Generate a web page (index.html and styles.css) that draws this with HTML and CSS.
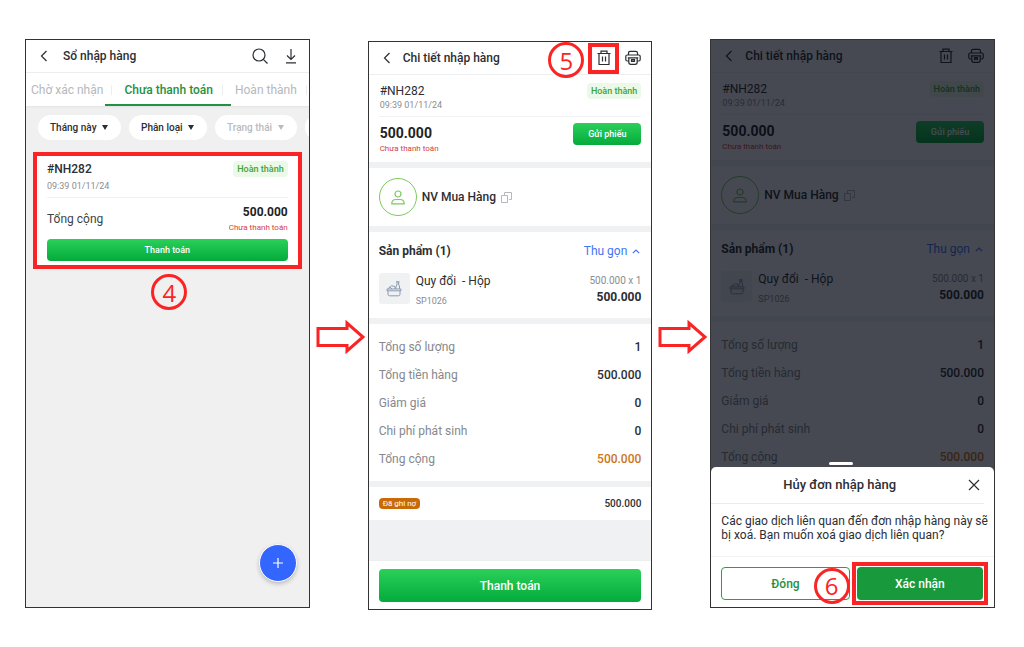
FILE: index.html
```html
<!DOCTYPE html>
<html lang="vi">
<head>
    <meta charset="UTF-8">
    <meta name="viewport" content="width=device-width, initial-scale=1.0">
    <title>Sổ nhập hàng</title>
    <link rel="stylesheet" href="styles.css">
</head>
<body>
    <!-- shared icons -->
    <svg class="sprite" aria-hidden="true">
        <symbol id="i-back" viewBox="0 0 8 12"><path d="M6.500 1L1.500 6l5 5" /></symbol>
        <symbol id="i-search" viewBox="0 0 16 16"><circle cx="7" cy="7" r="6" /><path d="M11.300 11.300L15.500 15.500" /></symbol>
        <symbol id="i-download" viewBox="0 0 12 16"><path d="M6 1v10M2 7.500l4 4 4-4M1 14.800h10" /></symbol>
        <symbol id="i-trash" viewBox="0 0 14 16"><path d="M.5 3.500h13M4 3.500V1.200h6v2.300M2 3.500v11h10v-11M5.500 6.500v5M8.500 6.500v5" /></symbol>
        <symbol id="i-print" viewBox="0 0 16 16"><path d="M3.500 5V3Q3.500 1.300 5.200 1.300h5.600Q12.500 1.300 12.500 3V5M3.500 11H2.200Q.8 11 .8 9.500v-3Q.8 5 2.200 5h11.600q1.400 0 1.400 1.500v3q0 1.500-1.400 1.500h-1.300M2.800 7.800h10.400M3.800 7.800v4.500q0 2 2 2h4.400q2 0 2-2V7.800M6 9.500h4M6 11.500h4M6.500 9v3M8 9v3M9.500 9v3" /></symbol>
        <symbol id="i-user" viewBox="0 0 14 15"><circle cx="7" cy="4" r="3" /><path d="M.8 13.800c0-3 2-4.300 4-4.300h4.400c2 0 4 1.300 4 4.300z" /></symbol>
        <symbol id="i-copy" viewBox="0 0 11 11"><path d="M3.500 3V.5h7v7H8M.5 3.500h6v7h-6z" /></symbol>
        <symbol id="i-up" viewBox="0 0 8 5"><path d="M.8 4.200L4 1l3.200 3.200" /></symbol>
        <symbol id="i-basket" viewBox="0 0 16 16"><path d="M1 8h14v1.800H1zM2 9.800v3.400q0 1.600 1.600 1.600h8.800q1.600 0 1.600-1.600V9.800M2.500 8q0-2 2-2.300Q5.500 4 7 5.200q1.300-.6 2 .8V8M10 8V5l1-1V.8M13.500 8V5l-.8-1V.8M10 .8h3.500M4 6l2 2" /></symbol>
        <symbol id="i-close" viewBox="0 0 12 12"><path d="M1 1l10 10M11 1L1 11" /></symbol>
    </svg>

    <main class="flow">
        <!-- step 4: order list -->
        <section class="phone list">
            <header class="topbar">
                <button class="icon-btn"><svg class="icon back"><use href="#i-back" /></svg></button>
                <h1>Sổ nhập hàng</h1>
                <button class="icon-btn"><svg class="icon search"><use href="#i-search" /></svg></button>
                <button class="icon-btn"><svg class="icon download"><use href="#i-download" /></svg></button>
            </header>
            <nav class="tabs">
                <a href="#">Chờ xác nhận</a>
                <a href="#" class="active">Chưa thanh toán</a>
                <a href="#">Hoàn thành</a>
            </nav>
            <div class="filters">
                <button>Tháng này <i class="caret"></i></button>
                <button>Phân loại <i class="caret"></i></button>
                <button class="muted">Trạng thái <i class="caret"></i></button>
                <button class="muted" aria-label="Lọc thêm"></button>
            </div>
            <article class="order">
                <div class="row order-head">
                    <div>
                        <h2>#NH282</h2>
                        <time>09:39 01/11/24</time>
                    </div>
                    <span class="badge">Hoàn thành</span>
                </div>
                <div class="row order-total">
                    <span>Tổng cộng</span>
                    <div class="amount">
                        <strong>500.000</strong>
                        <small class="unpaid">Chưa thanh toán</small>
                    </div>
                </div>
                <button class="btn small">Thanh toán</button>
            </article>
            <span class="step below">4</span>
            <button class="fab" aria-label="Thêm"><svg class="icon"><path d="M6 1v10M1 6h10" /></svg></button>
        </section>

        <svg class="arrow" viewBox="0 0 50 34"><path d="M2 8.500h29V3l16 14-16 14v-5.500H2z" /></svg>

        <!-- step 5: order detail -->
        <section class="phone detail lower">
            <header class="topbar">
                <button class="icon-btn"><svg class="icon back"><use href="#i-back" /></svg></button>
                <h1>Chi tiết nhập hàng</h1>
                <button class="icon-btn marked"><svg class="icon trash"><use href="#i-trash" /></svg><span class="step beside">5</span></button>
                <button class="icon-btn"><svg class="icon print"><use href="#i-print" /></svg></button>
            </header>
            <div class="block summary">
                <div class="row order-head">
                    <div>
                        <h2>#NH282</h2>
                        <time>09:39 01/11/24</time>
                    </div>
                    <span class="badge">Hoàn thành</span>
                </div>
                <div class="row pay">
                    <div>
                        <strong>500.000</strong>
                        <small class="unpaid">Chưa thanh toán</small>
                    </div>
                    <button class="btn small">Gửi phiếu</button>
                </div>
            </div>
            <div class="block supplier">
                <span class="avatar"><svg class="icon"><use href="#i-user" /></svg></span>
                <span>NV Mua Hàng</span>
                <svg class="icon copy"><use href="#i-copy" /></svg>
            </div>
            <div class="block products">
                <div class="row products-head">
                    <h3>Sản phẩm (1)</h3>
                    <a href="#">Thu gọn <svg class="icon up"><use href="#i-up" /></svg></a>
                </div>
                <div class="product">
                    <span class="thumb"><svg class="icon"><use href="#i-basket" /></svg></span>
                    <div class="name">
                        <span>Quy đổi &nbsp;- Hộp</span>
                        <small>SP1026</small>
                    </div>
                    <div class="price">
                        <small>500.000 x 1</small>
                        <strong>500.000</strong>
                    </div>
                </div>
            </div>
            <dl class="block totals">
                <div class="row"><dt>Tổng số lượng</dt><dd>1</dd></div>
                <div class="row"><dt>Tổng tiền hàng</dt><dd>500.000</dd></div>
                <div class="row"><dt>Giảm giá</dt><dd>0</dd></div>
                <div class="row"><dt>Chi phí phát sinh</dt><dd>0</dd></div>
                <div class="row"><dt>Tổng cộng</dt><dd class="orange">500.000</dd></div>
            </dl>
            <div class="row debt">
                <span class="tag">Đã ghi nợ</span>
                <strong>500.000</strong>
            </div>
            <footer class="actions">
                <button class="btn">Thanh toán</button>
            </footer>
        </section>

        <svg class="arrow" viewBox="0 0 50 34"><path d="M2 8.500h29V3l16 14-16 14v-5.500H2z" /></svg>

        <!-- step 6: confirm dialog over the detail -->
        <section class="phone detail">
            <header class="topbar">
                <button class="icon-btn"><svg class="icon back"><use href="#i-back" /></svg></button>
                <h1>Chi tiết nhập hàng</h1>
                <button class="icon-btn"><svg class="icon trash"><use href="#i-trash" /></svg></button>
                <button class="icon-btn"><svg class="icon print"><use href="#i-print" /></svg></button>
            </header>
            <div class="block summary">
                <div class="row order-head">
                    <div>
                        <h2>#NH282</h2>
                        <time>09:39 01/11/24</time>
                    </div>
                    <span class="badge">Hoàn thành</span>
                </div>
                <div class="row pay">
                    <div>
                        <strong>500.000</strong>
                        <small class="unpaid">Chưa thanh toán</small>
                    </div>
                    <button class="btn small">Gửi phiếu</button>
                </div>
            </div>
            <div class="block supplier">
                <span class="avatar"><svg class="icon"><use href="#i-user" /></svg></span>
                <span>NV Mua Hàng</span>
                <svg class="icon copy"><use href="#i-copy" /></svg>
            </div>
            <div class="block products">
                <div class="row products-head">
                    <h3>Sản phẩm (1)</h3>
                    <a href="#">Thu gọn <svg class="icon up"><use href="#i-up" /></svg></a>
                </div>
                <div class="product">
                    <span class="thumb"><svg class="icon"><use href="#i-basket" /></svg></span>
                    <div class="name">
                        <span>Quy đổi &nbsp;- Hộp</span>
                        <small>SP1026</small>
                    </div>
                    <div class="price">
                        <small>500.000 x 1</small>
                        <strong>500.000</strong>
                    </div>
                </div>
            </div>
            <dl class="block totals">
                <div class="row"><dt>Tổng số lượng</dt><dd>1</dd></div>
                <div class="row"><dt>Tổng tiền hàng</dt><dd>500.000</dd></div>
                <div class="row"><dt>Giảm giá</dt><dd>0</dd></div>
                <div class="row"><dt>Chi phí phát sinh</dt><dd>0</dd></div>
                <div class="row"><dt>Tổng cộng</dt><dd class="orange">500.000</dd></div>
            </dl>
            <div class="overlay">
                <span class="handle"></span>
                <div class="sheet" role="dialog" aria-labelledby="sheet-title">
                    <div class="sheet-head">
                        <h2 id="sheet-title">Hủy đơn nhập hàng</h2>
                        <button class="icon-btn" aria-label="Đóng"><svg class="icon close"><use href="#i-close" /></svg></button>
                    </div>
                    <p>Các giao dịch liên quan đến đơn nhập hàng này sẽ bị xoá. Bạn muốn xoá giao dịch liên quan?</p>
                    <div class="sheet-actions">
                        <button class="btn outline">Đóng</button>
                        <div class="confirm">
                            <button class="btn solid">Xác nhận</button>
                            <span class="step beside">6</span>
                        </div>
                    </div>
                </div>
            </div>
        </section>
    </main>
</body>
</html>
```

FILE: styles.css
```css
* {
    margin: 0;
    padding: 0;
    box-sizing: border-box;
}
body {
    min-height: 100vh;
    display: flex;
    padding: 39px 29px 39px 25px;
    background: #fff;
    color: #2b2e33;
    font-family: Roboto, sans-serif;
    font-size: 12px;
    line-height: 16px;
}
button {
    border: 0;
    background: none;
    color: inherit;
    font: inherit;
    cursor: pointer;
}
a {
    color: inherit;
    text-decoration: none;
}
h1, h2, h3 {
    font-size: 12px;
    font-weight: 500;
}
small {
    display: block;
    font-size: 10px;
    line-height: 12px;
}
.sprite {
    position: absolute;
    width: 0;
    height: 0;
}
.icon {
    display: block;
    fill: none;
    stroke: currentColor;
    stroke-width: 1.2;
}
.flow {
    flex: 1;
    display: grid;
    grid-template-columns: 1fr 58px 1fr 58px 1fr;
}
.phone {
    position: relative;
    display: flex;
    flex-direction: column;
    min-width: 0;
    border: 1px solid #333;
    overflow: hidden;
    background: #f0f1f3;
}
.phone.list {
    background: #f0f0f0;
}
.phone.lower {
    margin: 2px 0 -2px;
}
.arrow {
    align-self: center;
    justify-self: center;
    width: 50px;
    margin: 26px 0 0 4px;
    fill: #fff;
    stroke: #fb2424;
    stroke-width: 3;
}
.row {
    display: flex;
    justify-content: space-between;
    align-items: center;
}

/* top bar */
.topbar {
    display: flex;
    align-items: center;
    height: 33px;
    padding: 0 10px 0 14px;
    border-bottom: 1px solid #eceef0;
    background: #fff;
}
.topbar h1 {
    flex: 1;
    margin-left: 12px;
}
.list .topbar h1 {
    margin-left: 15px;
}
.icon-btn {
    position: relative;
}
.back {
    width: 8px;
    height: 12px;
}
.search {
    width: 16px;
    height: 16px;
}
.download {
    width: 12px;
    height: 16px;
    margin: 0 2px 0 17px;
}
.trash {
    width: 14px;
    height: 16px;
}
.print {
    width: 16px;
    height: 16px;
}
.detail .topbar .icon-btn:nth-of-type(2) {
    display: flex;
    align-items: center;
    justify-content: center;
    width: 31px;
    height: 31px;
    margin-right: 6px;
}
.marked {
    border: 4px solid #fb2424;
}

/* numbered steps */
.step {
    display: flex;
    align-items: center;
    justify-content: center;
    width: 36px;
    height: 36px;
    border: 3px solid #fb2424;
    border-radius: 50%;
    color: #fb2424;
    font: 24px "Open Sans", sans-serif;
}
.step.below {
    align-self: center;
    margin: 5px 0 0 4px;
}
.step.beside {
    position: absolute;
    top: 50%;
    right: 100%;
    margin: -16px 8px 0 0;
}
.confirm .step.beside {
    margin-right: 6px;
}

/* order list */
.tabs {
    display: flex;
    height: 33px;
    background: #fff;
    color: #b5b8bc;
    white-space: nowrap;
    box-shadow: 0 1px 2px #e2e2e2;
}
.tabs a {
    position: relative;
    padding: 9px 10px 0 12px;
}
.tabs a:first-child {
    padding-left: 5px;
    padding-right: 9px;
}
.tabs a::before {
    content: "";
    position: absolute;
    right: 0;
    top: 12px;
    height: 10px;
    border-left: 1px solid #eee;
}
.tabs .active {
    color: #23913f;
    font-weight: 500;
}
.tabs .active::after {
    content: "";
    position: absolute;
    left: -7px;
    right: -8px;
    bottom: 0;
    height: 2px;
    background: #23913f;
}
.filters {
    display: flex;
    gap: 8px;
    padding: 9px 0 12px 12px;
}
.filters button {
    flex: none;
    height: 25px;
    padding: 0 12px;
    border-radius: 13px;
    background: #fff;
    font-size: 10px;
    font-weight: 500;
}
.filters .muted {
    color: #b9bbbe;
}
.caret {
    display: inline-block;
    margin: 0 1px 1px 3px;
    border: 3px solid transparent;
    border-top: 5px solid;
    border-bottom: 0;
}
.order {
    margin: 0 7px;
    padding: 5px 10px 4px;
    border: 4px solid #fb2424;
    background: #fff;
}
.order-head {
    align-items: flex-start;
}
time {
    display: block;
    color: #8a8d91;
    font-size: 9px;
    line-height: 12px;
}
.order .order-head {
    padding-bottom: 5px;
    border-bottom: 1px solid #eef0f2;
}
.order time {
    margin-top: 3px;
}
.badge {
    padding: 0 4px;
    border-radius: 4px;
    background: #ebf9e8;
    color: #43a333;
    font-size: 9px;
    font-weight: 500;
}
.order-total {
    height: 41px;
    color: #3f4246;
}
.amount {
    text-align: right;
}
.amount strong, .pay strong {
    color: #222;
    font-weight: 700;
}
.pay strong {
    font-size: 14px;
}
.unpaid {
    margin-top: 2px;
    color: #d63c3c;
    font-size: 8px;
}
.pay .unpaid {
    margin-top: 1px;
}
.btn {
    height: 33px;
    border-radius: 4px;
    background: linear-gradient(#2bd05a, #04ab3b);
    color: #fff;
    font-weight: 500;
}
.btn.small {
    height: 22px;
    font-size: 9px;
}
.order .btn {
    display: block;
    width: 100%;
}
.fab {
    position: absolute;
    right: 12px;
    bottom: 25px;
    display: flex;
    align-items: center;
    justify-content: center;
    width: 38px;
    height: 38px;
    border: 1px solid #fff;
    border-radius: 50%;
    background: #3366ff;
    color: #fff;
    box-shadow: 0 2px 4px #bbb;
}
.fab .icon {
    width: 12px;
    height: 12px;
}

/* order detail */
.block {
    margin-bottom: 6px;
    padding: 0 10px;
    background: #fff;
}
.summary .order-head {
    height: 42px;
    padding-top: 8px;
    border-bottom: 1px solid #f0f2f4;
}
.summary h2 {
    font-weight: 400;
}
.summary .order-head > div {
    padding-left: 1px;
}
.pay {
    height: 45px;
    padding-left: 1px;
}
.pay .btn {
    width: 68px;
    margin-bottom: 12px;
}
.supplier {
    display: flex;
    align-items: center;
    gap: 5px;
    height: 58px;
    font-weight: 500;
}
.avatar {
    display: flex;
    align-items: center;
    justify-content: center;
    width: 38px;
    height: 38px;
    border: 1px solid #7cc95e;
    border-radius: 50%;
    color: #7cc95e;
}
.avatar .icon {
    width: 14px;
    height: 15px;
}
.copy {
    width: 11px;
    height: 11px;
    color: #b5b8bc;
    stroke-width: 1;
}
.products {
    height: 86px;
    padding-top: 11px;
}
.products h3 {
    font-weight: 700;
}
.products a {
    display: flex;
    align-items: center;
    gap: 5px;
    color: #4475f2;
}
.up {
    width: 8px;
    height: 5px;
    margin-right: 1px;
}
.product {
    display: flex;
    gap: 6px;
    margin-top: 14px;
}
.thumb {
    display: flex;
    align-items: center;
    justify-content: center;
    width: 31px;
    height: 31px;
    border-radius: 3px;
    background: #f0f1f3;
    color: #8b9bb0;
}
.thumb .icon {
    width: 16px;
    height: 16px;
    stroke-width: 1;
}
.name {
    flex: 1;
}
.name small {
    margin-top: 6px;
    color: #8a8d91;
    font-size: 9px;
}
.price {
    margin-top: 2px;
    text-align: right;
}
.price small {
    margin-bottom: 2px;
    color: #8a8d91;
}
.price strong {
    font-weight: 700;
}
.totals {
    padding-top: 9px;
    padding-bottom: 8px;
    color: #85888d;
}
.totals .row {
    height: 28px;
}
.totals dd {
    color: #2b2e33;
    font-weight: 500;
}
.totals .orange {
    color: #cd7420;
}
.debt {
    height: 33px;
    padding: 0 10px;
    background: #fff;
}
.debt strong {
    font-size: 10px;
    font-weight: 500;
}
.tag {
    height: 11px;
    padding: 0 4px;
    border-radius: 4px;
    background: #c96a08;
    color: #fff;
    font-size: 8px;
    line-height: 11px;
}
.actions {
    margin-top: auto;
    padding: 8px 10px 7px;
    border-top: 1px solid #eee;
    background: #fff;
}
.actions .btn {
    display: block;
    width: 100%;
}

/* confirm sheet */
.overlay {
    position: absolute;
    inset: 0;
    display: flex;
    flex-direction: column;
    justify-content: flex-end;
    background: rgba(5, 10, 20, 0.74);
}
.handle {
    align-self: center;
    width: 24px;
    height: 3px;
    margin: 0 24px 2px 0;
    border-radius: 2px;
    background: #fff;
}
.sheet {
    border-radius: 5px 5px 0 0;
    background: #fff;
}
.sheet-head {
    display: flex;
    align-items: center;
    height: 37px;
    margin-right: 10px;
    border-bottom: 1px solid #e8eef0;
}
.sheet-head h2 {
    flex: 1;
    font-size: 13px;
    text-align: center;
}
.sheet-head .icon-btn {
    margin-right: 4px;
}
.close {
    width: 12px;
    height: 12px;
}
.sheet p {
    padding: 10px 4px 14px 10px;
    line-height: 14px;
}
.sheet-actions {
    display: flex;
    gap: 2px;
    padding: 5px 6px 2px 10px;
    border-top: 1px solid #f0f2f4;
}
.outline {
    flex: 1;
    margin-top: 5px;
    border: 1px solid #23a04a;
    background: #fff;
    color: #23913f;
}
.confirm {
    position: relative;
    flex: 1;
    padding: 1px;
    border: 4px solid #fb2424;
}
.solid {
    width: 100%;
    background: #18993c;
}
```
